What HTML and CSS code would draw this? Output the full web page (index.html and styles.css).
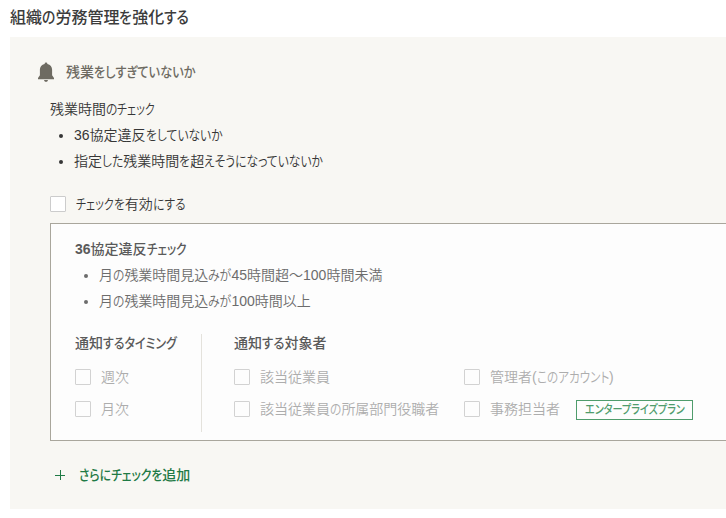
FILE: index.html
```html
<!DOCTYPE html>
<html lang="ja">
<head>
<meta charset="utf-8">
<title>組織の労務管理を強化する</title>
<link rel="stylesheet" href="styles.css">
</head>
<body>
<h1 class="title">組織<span class="k">の</span>労務管理<span class="k">を</span>強化<span class="k">する</span></h1>
<section class="panel">
  <header class="panel-head">
    <svg class="bell" viewBox="0 0 18 20" width="18" height="20"><path d="M9 0.5a1.4 1.4 0 0 1 1.4 1.4c3 .7 4.7 3 4.7 5.7v5.6L17 16v1.2H1V16l1.9-2.8V7.6c0-2.7 1.7-5 4.7-5.7A1.4 1.4 0 0 1 9 .5zM7 18.1h4a2 1.8 0 0 1-4 0z"/></svg>
    <h2 class="panel-title">残業<span class="k">をしすぎていないか</span></h2>
  </header>
  <div class="intro">
    <p class="line">残業時間<span class="k">の</span><span class="k kata">チェック</span></p>
    <ul class="list">
      <li>36協定違反<span class="k">をしていないか</span></li>
      <li>指定<span class="k">した</span>残業時間<span class="k">を</span>超<span class="k">えそうになっていないか</span></li>
    </ul>
  </div>
  <label class="check enable"><i class="box"></i><span><span class="k kata">チェック</span><span class="k">を</span>有効<span class="k">にする</span></span></label>
  <div class="card">
    <h3 class="sub"><b>36</b>協定違反<span class="k kata">チェック</span></h3>
    <ul class="list">
      <li>月<span class="k">の</span>残業時間見込<span class="k">みが</span>45時間超～100時間未満</li>
      <li>月<span class="k">の</span>残業時間見込<span class="k">みが</span>100時間以上</li>
    </ul>
    <div class="options">
      <div class="timing">
        <h3 class="sub">通知<span class="k">するタイミング</span></h3>
        <label class="check"><i class="box"></i><span>週次</span></label>
        <label class="check"><i class="box"></i><span>月次</span></label>
      </div>
      <div class="targets">
        <h3 class="sub">通知<span class="k">する</span>対象者</h3>
        <div class="grid">
          <label class="check"><i class="box"></i><span>該当従業員</span></label>
          <label class="check"><i class="box"></i><span>管理者(<span class="k account">このアカウント</span>)</span></label>
          <label class="check"><i class="box"></i><span>該当従業員<span class="k">の</span>所属部門役職者</span></label>
          <label class="check"><i class="box"></i><span>事務担当者</span><span class="badge"><span class="k">エンタープライズプラン</span></span></label>
        </div>
      </div>
    </div>
  </div>
  <a class="add"><svg class="plus" viewBox="0 0 10 10" width="10" height="10"><path d="M0 5.5h10M5.5 0v10"/></svg><span><span class="k">さらにチェックを</span>追加</span></a>
</section>
<script src="kana.js"></script>
</body>
</html>
```
FILE: kana.js
```js
// Condensed kana: each run keeps its glyph height and takes up its scaled width.
document.fonts.ready.then(() => {
  document.querySelectorAll('.k').forEach(run => {
    const scale = parseFloat(getComputedStyle(run).getPropertyValue('--s'));
    const width = parseFloat(getComputedStyle(run).width);
    run.style.marginRight = (width * (scale - 1)).toFixed(2) + 'px';
  });
});
```
FILE: styles.css
```css
* { box-sizing: border-box; }
body { margin: 0; width: 726px; height: 518px; overflow: hidden; background: #fff; color: #363636; font: 14px/26px "Liberation Sans", "Noto Sans CJK JP", sans-serif; font-weight: 350; white-space: nowrap; }
h1, h2, h3, p, ul { margin: 0; padding: 0; }
.k { --s: .842; display: inline-block; font-feature-settings: "palt"; transform: scaleX(var(--s)); transform-origin: 0 50%; }
.kata { --s: .79; }
.account { --s: .827; }
.title { height: 37px; padding: 5px 0 0 10px; font-size: 16px; font-weight: 500; color: #3c3c3c; }
.title .k { --s: .865; }
.panel { margin-left: 10px; height: 472px; padding-left: 40px; background: #f8f7f3; }
.panel-head { display: flex; align-items: center; height: 59px; padding-top: 11px; margin-left: -13px; color: #6e6b62; }
.bell { fill: #6e6b62; }
.panel-title { margin-left: 11px; font-size: 14px; font-weight: 500; }
.panel-title .k { --s: .872; }
.list { padding-left: 24px; }
.check { display: flex; align-items: center; height: 32px; }
.box { width: 16px; height: 16px; border: 1px solid #ccc; border-radius: 1px; background: #fff; margin-right: 10px; }
.enable { margin-top: 14px; }
.card { margin-top: 3px; height: 218px; padding: 12px 0 0 24px; border: 1px solid #a9a69c; border-right: 0; background: #fdfdfd; color: #6c6c6c; }
.sub { font-size: 14px; font-weight: 500; color: #5a5a5a; }
.sub .k { --s: .855; }
.sub .kata { --s: .825; }
.options { display: flex; margin-top: 20px; }
.options .sub { line-height: 18px; margin-bottom: 9px; }
.targets .sub .k { --s: .89; }
.timing { width: 127px; height: 98px; border-right: 1px solid #e4e2dc; }
.targets { padding-left: 32px; }
.grid { display: grid; grid-template-columns: 230px auto; }
.grid, .timing .check { color: #adadad; }
.card .box { border-color: #d2d2d2; background: #fdfdfd; }
.badge { margin: 2px 0 0 16px; padding: 0 8px; width: 117px; height: 20px; border: 1px solid #4f9c6c; color: #4f9c6c; font-size: 12px; line-height: 18px; font-weight: 500; }
.add { display: flex; align-items: center; margin: 21px 0 0 5px; color: #1f7a45; font-weight: 500; }
.plus { stroke: #1f7a45; fill: none; margin-right: 14px; }
```
